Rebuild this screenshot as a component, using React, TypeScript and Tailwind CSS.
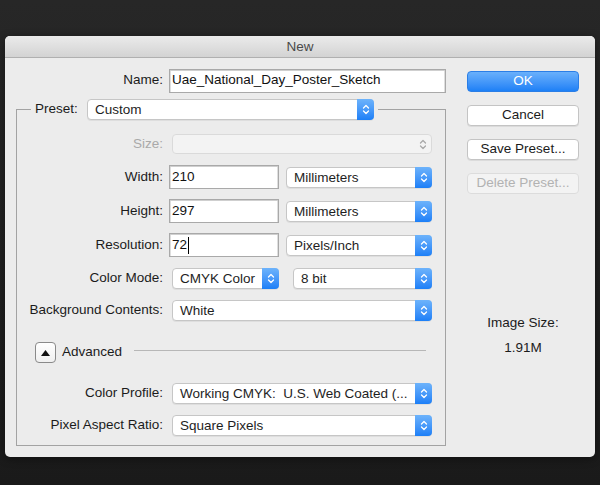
import React from "react";

const Chevrons = ({ color = "white" }: { color?: string }) => (
  <svg width="8" height="13" viewBox="0 0 8 13" fill="none" stroke={color} strokeWidth="1.3" strokeLinecap="round" strokeLinejoin="round">
    <path d="M1.5 5 L4 2.5 L6.5 5" />
    <path d="M1.5 8 L4 10.5 L6.5 8" />
  </svg>
);

function Popup({ value, className = "", disabled = false }: { value: string; className?: string; disabled?: boolean }) {
  if (disabled) {
    return (
      <div className={`flex h-[20px] items-center rounded-[4px] border border-[#dadada] bg-[#f3f3f3] ${className}`}>
        <span className="flex-1" />
        <div className="flex w-[17px] items-center justify-center">
          <Chevrons color="#a8a8a8" />
        </div>
      </div>
    );
  }
  return (
    <div className={`flex h-[21px] items-stretch rounded-[4px] border border-[#c6c6c6] bg-white shadow-[0_1px_0_rgba(0,0,0,0.06)] ${className}`}>
      <span className="flex-1 truncate whitespace-pre pl-[7px] text-[13.5px] leading-[19px] text-[#1e1e1e]">{value}</span>
      <div className="-my-px -mr-px flex w-[17px] items-center justify-center rounded-r-[4px] bg-linear-to-b from-[#6db3fb] to-[#1b7ff7]">
        <Chevrons />
      </div>
    </div>
  );
}

function Field({ value, caret = false, className = "" }: { value: string; caret?: boolean; className?: string }) {
  return (
    <div className={`flex h-[24px] items-center border border-[#a9a9a9] bg-white pl-[2px] text-[13.5px] text-[#111] shadow-[inset_0_1px_0_#cfcfcf,inset_1px_0_0_#dedede,inset_-1px_0_0_#dedede] ${className}`}>
      <span>{value}</span>
      {caret && <span className="ml-px h-[17px] w-px bg-black" />}
    </div>
  );
}

function Row({ label, className, children, disabled = false }: { label: string; className: string; children: React.ReactNode; disabled?: boolean }) {
  return (
    <div className={`flex items-center ${className}`}>
      <span className={`w-[146px] whitespace-nowrap text-right text-[13.5px] ${disabled ? "text-[#a9a9a9]" : "text-[#1b1b1b]"}`}>{label}</span>
      {children}
    </div>
  );
}

function Button({ label, primary = false, disabled = false, className = "" }: { label: string; primary?: boolean; disabled?: boolean; className?: string }) {
  const look = primary
    ? "border-[#2b7ee6] bg-linear-to-b from-[#69b0fb] to-[#1c80f6] text-white"
    : disabled
    ? "border-[#dcdcdc] bg-[#f3f3f3] text-[#b2b2b2]"
    : "border-[#c4c4c4] bg-white text-[#1b1b1b] shadow-[0_1px_0_rgba(0,0,0,0.07)]";
  return (
    <div className={`flex h-[21px] w-[112px] items-center justify-center rounded-[4px] border text-[13.5px] ${look} ${className}`}>
      {label}
    </div>
  );
}

export default function App() {
  return (
    <div className="h-[485px] w-[600px] bg-linear-to-b from-[#272727] to-[#1a1a1a] pl-[5px] pt-[36px] font-['Liberation_Sans',Arial,sans-serif]">
      <div className="flex h-[421px] w-[590px] flex-col overflow-hidden rounded-[5px] bg-[#ececec] shadow-[0_2px_8px_rgba(0,0,0,0.4)]">
        <div className="h-[22px] border-b border-[#b0b0b0] bg-linear-to-b from-[#ebebeb] to-[#d3d3d3] text-center text-[13.5px] leading-[21px] text-[#4a4a4a]">
          New
        </div>

        <div className="flex flex-1">
          {/* left column */}
          <div className="w-[441px] pl-[11px]">
            <div className="mt-[11px] flex h-[23px] items-center pl-px">
              <span className="w-[146px] text-right text-[13.5px] text-[#1b1b1b]">Name:</span>
              <Field value="Uae_National_Day_Poster_Sketch" className="ml-[6px] h-[23px] w-[277px]" />
            </div>

            <fieldset className="mt-[7px] w-[430px] border border-[#a3a3a3] pb-[9px]">
              <legend className="ml-[14px] px-[4px]">
                <div className="flex h-[21px] items-center">
                  <span className="w-[52px] text-[13.5px] text-[#1b1b1b]">Preset:</span>
                  <Popup value="Custom" className="w-[287px]" />
                </div>
              </legend>

              <Row label="Size:" disabled className="mt-[14px] h-[20px]">
                <Popup value="" disabled className="ml-[9px] w-[260px]" />
              </Row>
              <Row label="Width:" className="mt-[11px] h-[24px]">
                <Field value="210" className="ml-[6px] w-[110px]" />
                <Popup value="Millimeters" className="ml-[7px] w-[146px]" />
              </Row>
              <Row label="Height:" className="mt-[10px] h-[24px]">
                <Field value="297" className="ml-[6px] w-[110px]" />
                <Popup value="Millimeters" className="ml-[7px] w-[146px]" />
              </Row>
              <Row label="Resolution:" className="mt-[10px] h-[24px]">
                <Field value="72" caret className="ml-[6px] w-[110px]" />
                <Popup value="Pixels/Inch" className="ml-[7px] w-[146px]" />
              </Row>
              <Row label="Color Mode:" className="mt-[11px] h-[21px]">
                <Popup value="CMYK Color" className="ml-[9px] w-[107px]" />
                <Popup value="8 bit" className="ml-[14px] w-[139px]" />
              </Row>
              <Row label="Background Contents:" className="mt-[11px] h-[21px]">
                <Popup value="White" className="ml-[9px] w-[260px]" />
              </Row>

              <div className="mt-[21px] flex h-[21px] items-center pl-[18px] pr-[19px]">
                <div className="flex h-[21px] w-[21px] items-center justify-center rounded-[4px] border border-[#8a8a8a] bg-linear-to-b from-white to-[#f0f0f0]">
                  <svg width="9" height="6" viewBox="0 0 9 6">
                    <path d="M4.5 0 L9 6 L0 6 Z" fill="#111" />
                  </svg>
                </div>
                <span className="ml-[6px] text-[13.5px] text-[#1b1b1b]">Advanced</span>
                <div className="ml-[12px] mb-[5px] h-px flex-1 bg-[#b7b7b7]" />
              </div>

              <Row label="Color Profile:" className="mt-[20px] h-[21px]">
                <Popup value="Working CMYK:  U.S. Web Coated (..." className="ml-[9px] w-[260px]" />
              </Row>
              <Row label="Pixel Aspect Ratio:" className="mt-[11px] h-[21px]">
                <Popup value="Square Pixels" className="ml-[9px] w-[260px]" />
              </Row>
            </fieldset>
          </div>

          {/* right column */}
          <div className="ml-[21px] flex w-[112px] flex-col items-center">
            <Button label="OK" primary className="mt-[13px]" />
            <Button label="Cancel" className="mt-[13px]" />
            <Button label="Save Preset..." className="mt-[13px]" />
            <Button label="Delete Preset..." disabled className="mt-[13px]" />
            <div className="mt-[121px] text-[13.5px] leading-[16px] text-[#1b1b1b]">Image Size:</div>
            <div className="mt-[9px] text-[13.5px] leading-[16px] text-[#1b1b1b]">1.91M</div>
          </div>
        </div>
      </div>
    </div>
  );
}
